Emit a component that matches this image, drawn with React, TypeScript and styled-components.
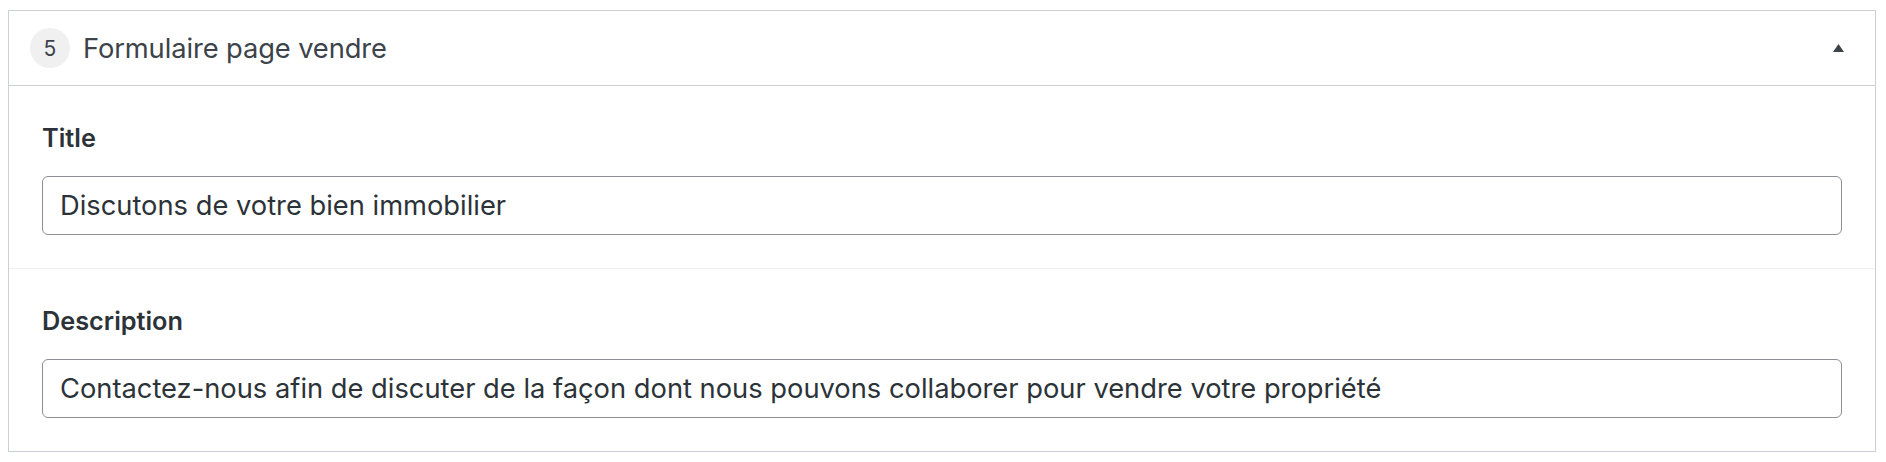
import React from "react";
import styled, { createGlobalStyle } from "styled-components";

const GlobalStyle = createGlobalStyle`
  html, body { margin: 0; padding: 0; background: #ffffff; }
  body { font-family: Inter, "Noto Sans", sans-serif; -webkit-font-smoothing: antialiased; }
  * { box-sizing: border-box; }
`;

const Page = styled.div`
  padding: 10px 10px 0 8px;
`;

const Panel = styled.section`
  border: 1px solid #ccd0d4;
  background: #fff;
`;

const Header = styled.div`
  display: flex;
  align-items: center;
  height: 75px;
  padding: 0 31px 0 21px;
  border-bottom: 1px solid #ccd0d4;
`;

const Badge = styled.span`
  display: flex;
  align-items: center;
  justify-content: center;
  width: 40px;
  height: 40px;
  border-radius: 50%;
  background: #f0f0f1;
  color: #3c434a;
  font-size: 21px;
  margin-right: 13px;
`;

const HeaderTitle = styled.h2`
  flex: 1;
  margin: 0;
  font-size: 27.3px;
  font-weight: 400;
  color: #3c434a;
  letter-spacing: -0.1px;
`;

const Toggle = styled.span`
  display: flex;
  width: 11px;
  height: 8px;
  color: #3c434a;
`;

const Field = styled.div<{ $last?: boolean }>`
  padding: 33px;
  border-bottom: ${(p) => (p.$last ? "none" : "1px solid #f0f0f1")};
`;

const Label = styled.label`
  display: block;
  font-size: 25.3px;
  font-weight: 600;
  line-height: 37px;
  color: #2c3338;
  margin-bottom: 20px;
`;

const Input = styled.input`
  display: block;
  width: 100%;
  height: 59px;
  padding: 0 17px;
  border: 1px solid #8c8f94;
  border-radius: 6px;
  font-family: Inter, "Noto Sans", sans-serif;
  font-size: 27.3px;
  color: #2c3338;
  background: #fff;
  outline: none;
`;

export default function App() {
  return (
    <Page>
      <GlobalStyle />
      <Panel>
        <Header>
          <Badge>5</Badge>
          <HeaderTitle>Formulaire page vendre</HeaderTitle>
          <Toggle>
            <svg width="11" height="8" viewBox="0 0 11 8">
              <polygon points="5.5,0 11,8 0,8" fill="currentColor" />
            </svg>
          </Toggle>
        </Header>
        <Field>
          <Label>Title</Label>
          <Input readOnly value="Discutons de votre bien immobilier" />
        </Field>
        <Field $last>
          <Label>Description</Label>
          <Input
            readOnly
            value="Contactez-nous afin de discuter de la façon dont nous pouvons collaborer pour vendre votre propriété"
          />
        </Field>
      </Panel>
    </Page>
  );
}
